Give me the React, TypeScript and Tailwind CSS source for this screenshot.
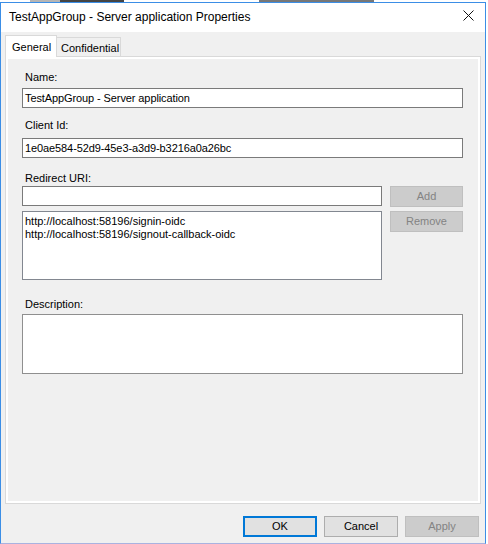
import React from 'react';

const font = { fontFamily: '"Liberation Sans", Arial, sans-serif' };

function Label({ text, className = '' }: { text: string; className?: string }) {
  return <div className={`text-[11px] leading-[15px] text-black ${className}`}>{text}</div>;
}

function TextBox({ value = '', className = '' }: { value?: string; className?: string }) {
  return (
    <div
      className={`h-[20px] border border-[#7a7a7a] bg-white px-[2px] text-[11px] leading-[18px] tracking-[-0.1px] text-black whitespace-nowrap overflow-hidden ${className}`}
    >
      {value}
    </div>
  );
}

function WinButton({
  label,
  disabled = false,
  primary = false,
  className = 'w-[74px]',
}: {
  label: string;
  disabled?: boolean;
  primary?: boolean;
  className?: string;
}) {
  const look = disabled
    ? 'bg-[#cccccc] border border-[#bfbfbf] text-[#838383]'
    : primary
    ? 'bg-[#e1e1e1] border-2 border-[#0078d7] text-black'
    : 'bg-[#e1e1e1] border border-[#adadad] text-black';
  return (
    <div className={`flex h-[21px] items-center justify-center text-[11px] ${look} ${className}`}>
      {label}
    </div>
  );
}

export default function App() {
  const uris = ['http://localhost:58196/signin-oidc', 'http://localhost:58196/signout-callback-oidc'];

  return (
    <div className="w-[488px] h-[544px] bg-white overflow-hidden" style={font}>
      {/* what peeks out behind the dialog */}
      <div className="flex h-[2px] bg-white">
        <div className="ml-[30px] w-[30px] bg-[#b5b5b5]" />
        <div className="w-[64px] bg-[#444]" />
        <div className="ml-[135px] w-[115px] bg-[#777]" />
      </div>

      <div className="flex h-[542px] w-[486px] flex-col border border-[#3b8ee6] border-b-[#a9b2e0] bg-[#f0f0f0]">
        {/* Title bar */}
        <div className="flex h-[29px] items-center justify-between bg-white pl-[8px] pr-[11px]">
          <span className="text-[12px] leading-[15px] text-black">
            TestAppGroup - Server application Properties
          </span>
          <svg width="11" height="11" viewBox="0 0 11 11" className="mb-[5px]">
            <path d="M0.5 0.5 L10.5 10.5 M10.5 0.5 L0.5 10.5" stroke="#111" strokeWidth="1" />
          </svg>
        </div>

        {/* Body */}
        <div className="flex flex-1 flex-col pt-[3px]">
          {/* Tabs */}
          <div className="flex items-end pl-[4px]">
            <div className="relative z-10 -mb-px flex h-[22px] w-[52px] items-start border border-b-0 border-[#d9d9d9] bg-white pl-[6px] pt-[4px] text-[11px] leading-[15px] text-black">
              General
            </div>
            <div className="flex h-[19px] w-[64px] items-start border border-b-0 border-l-0 border-[#d9d9d9] bg-[#f0f0f0] pl-[4px] pt-[3px] text-[11px] leading-[15px] text-black">
              Confidential
            </div>
          </div>

          {/* Tab page */}
          <div className="ml-[4px] h-[448px] w-[476px] border border-[#d9d9d9] bg-white p-[2px]">
            <div className="flex h-full flex-col bg-[#f0f0f0] pl-[14px] pr-[15px] pt-[11px]">
              <Label text="Name:" className="pl-[3px]" />
              <TextBox value="TestAppGroup - Server application" className="mt-[3px]" />

              <Label text="Client Id:" className="mt-[10px] pl-[3px]" />
              <TextBox value="1e0ae584-52d9-45e3-a3d9-b3216a0a26bc" className="mt-[5px]" />

              <Label text="Redirect URI:" className="mt-[13px] pl-[3px]" />
              <div className="flex gap-[8px]">
                <TextBox className="w-[360px]" />
                <WinButton label="Add" disabled className="w-[73px]" />
              </div>
              <div className="mt-[4px] flex gap-[8px]">
                <div className="h-[69px] w-[360px] border border-[#828790] bg-white px-[2px] pt-[3px] text-[11px] leading-[13px] text-black">
                  {uris.map((u) => (
                    <div key={u}>{u}</div>
                  ))}
                </div>
                <WinButton label="Remove" disabled className="w-[73px]" />
              </div>

              <Label text="Description:" className="mt-[17px] pl-[3px]" />
              <div className="mt-[2px] h-[60px] border border-[#8f8f8f] bg-white" />
            </div>
          </div>

          {/* Dialog buttons */}
          <div className="mt-[12px] flex justify-end gap-[7px] pr-[6px]">
            <WinButton label="OK" primary />
            <WinButton label="Cancel" />
            <WinButton label="Apply" disabled />
          </div>
        </div>
      </div>
    </div>
  );
}
